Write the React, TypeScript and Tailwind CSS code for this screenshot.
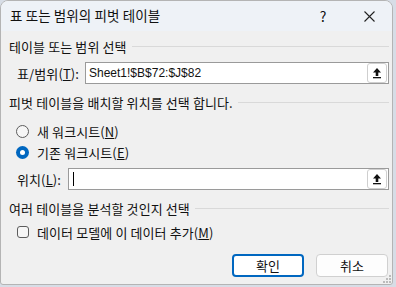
import React from "react";

const font = { fontFamily: "'Noto Sans CJK KR', 'Noto Sans', sans-serif" };

function U({ c }: { c: string }) {
  return <span className="underline underline-offset-[1px]">{c}</span>;
}

function Section({ text }: { text: string }) {
  return (
    <div className="flex items-center h-[16px] pl-[8px] pr-[3px] gap-[5px]">
      <span className="whitespace-nowrap">{text}</span>
      <div className="flex-1 h-px bg-[#d9d9d9] mt-px" />
    </div>
  );
}

function RefBtn() {
  return (
    <div className="w-[20px] h-[20px] mr-px rounded-[3px] border border-[#cfcfcf] bg-white flex items-center justify-center">
      <svg width="12" height="12" viewBox="0 0 12 12">
        <path d="M6 1 L10 5.5 L7.3 5.5 L7.3 9 L4.7 9 L4.7 5.5 L2 5.5 Z" fill="#111" />
        <rect x="2" y="10" width="8" height="1.3" fill="#111" />
      </svg>
    </div>
  );
}

export default function App() {
  return (
    <div className="w-[396px] h-[287px] bg-[#d7dde6] overflow-hidden" style={font}>
      <div className="w-[393px] h-[285px] rounded-t-[8px] rounded-b-[3px] border border-[#b4b4b4] bg-[#f0f0f0] flex flex-col overflow-hidden relative text-[13px] tracking-[0.1px] text-[#111] leading-none">
        <div className="h-[30px] bg-[#eef2f7] flex items-center shrink-0">
          <span className="pl-[9px] text-[13.5px] tracking-[0.1px] flex-1 whitespace-nowrap">표 또는 범위의 피벗 테이블</span>
          <div className="w-[46px] h-full flex items-center justify-center text-[14px]">?</div>
          <div className="w-[46px] h-full flex items-center justify-center">
            <svg width="11" height="11" viewBox="0 0 11 11">
              <path d="M0.5 0.5 L10.5 10.5 M10.5 0.5 L0.5 10.5" stroke="#222" strokeWidth="1.1" />
            </svg>
          </div>
        </div>
        <div className="flex flex-col pt-[7px]">
          <Section text="테이블 또는 범위 선택" />
          <div className="flex items-center mt-[8px] h-[22px]">
            <span className="pl-[16px] w-[84px] whitespace-nowrap">
              표/범위(<U c="T" />):
            </span>
            <div className="w-[304px] h-[22px] border border-[#9a9a9a] bg-white flex items-center justify-between pl-[3px]">
              <span className="text-[12px] tracking-normal" style={{ fontFamily: "'Liberation Sans', sans-serif" }}>Sheet1!$B$72:$J$82</span>
              <RefBtn />
            </div>
          </div>
          <div className="mt-[10px]">
            <Section text="피벗 테이블을 배치할 위치를 선택 합니다." />
          </div>
          <div className="flex items-center mt-[13px] h-[16px] pl-[15px]">
            <div className="w-[13px] h-[13px] rounded-full border border-[#5c5c5c] bg-[#f6f6f6]" />
            <span className="ml-[8px]">
              새 워크시트(<U c="N" />)
            </span>
          </div>
          <div className="flex items-center mt-[5px] h-[16px] pl-[15px]">
            <div className="w-[13px] h-[13px] rounded-full bg-[#0067c0] flex items-center justify-center">
              <div className="w-[5px] h-[5px] rounded-full bg-white" />
            </div>
            <span className="ml-[8px]">
              기존 워크시트(<U c="E" />)
            </span>
          </div>
          <div className="flex items-center mt-[8px] h-[22px]">
            <span className="pl-[16px] w-[67px] whitespace-nowrap">
              위치(<U c="L" />):
            </span>
            <div className="w-[321px] h-[22px] border border-[#9a9a9a] bg-white flex items-center justify-between pl-[4px]">
              <div className="w-px h-[14px] bg-black" />
              <RefBtn />
            </div>
          </div>
          <div className="mt-[10px]">
            <Section text="여러 테이블을 분석할 것인지 선택" />
          </div>
          <div className="flex items-center mt-[8px] h-[16px] pl-[16px]">
            <div className="w-[12px] h-[12px] rounded-[3px] border border-[#5c5c5c] bg-[#f6f6f6]" />
            <span className="ml-[8px]">
              데이터 모델에 이 데이터 추가(<U c="M" />)
            </span>
          </div>
          <div className="flex justify-end gap-[12px] mt-[14px] pr-[4px]">
            <div className="w-[72px] h-[23px] rounded-[4px] border-2 border-[#0067c0] bg-white flex items-center justify-center">
              확인
            </div>
            <div className="w-[72px] h-[23px] rounded-[4px] border border-[#d0d0d0] bg-[#fdfdfd] flex items-center justify-center">
              취소
            </div>
          </div>
        </div>
        <svg className="absolute right-[1px] bottom-[1px]" width="8" height="8" viewBox="0 0 8 8">
          <rect x="6" y="0" width="2" height="2" fill="#bbb" />
          <rect x="3" y="3" width="2" height="2" fill="#bbb" />
          <rect x="6" y="3" width="2" height="2" fill="#bbb" />
          <rect x="0" y="6" width="2" height="2" fill="#bbb" />
          <rect x="3" y="6" width="2" height="2" fill="#bbb" />
          <rect x="6" y="6" width="2" height="2" fill="#bbb" />
        </svg>
      </div>
    </div>
  );
}
